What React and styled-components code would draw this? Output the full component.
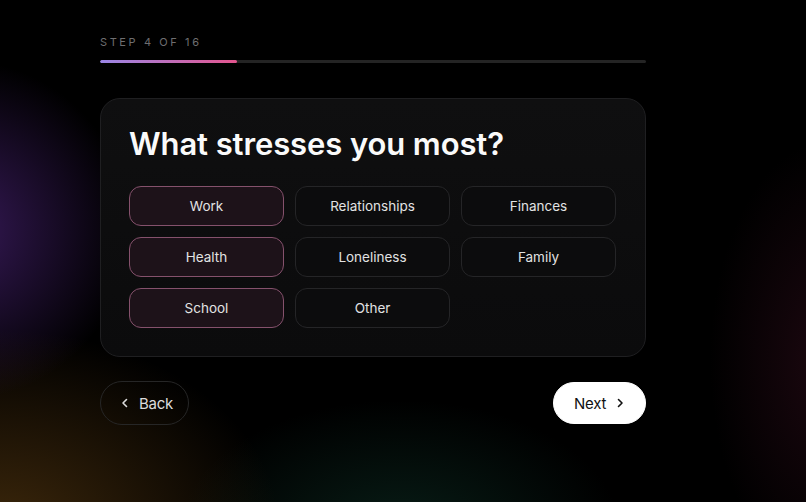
import React, {useState} from 'react';
import styled, {createGlobalStyle} from 'styled-components';

const OPTIONS = [
    'Work', 'Relationships', 'Finances',
    'Health', 'Loneliness', 'Family',
    'School', 'Other',
];

const GlobalStyle = createGlobalStyle`
  html, body {
    margin: 0;
    padding: 0;
    background: #000;
  }
  body {
    font-family: Inter, "Noto Sans", sans-serif;
    color: #e6e6e6;
  }
`;

const Page = styled.div`
  position: relative;
  width: 806px;
  height: 502px;
  overflow: hidden;
  background:
    radial-gradient(circle at -40px 230px, rgba(90, 42, 145, 0.6), transparent 170px),
    radial-gradient(ellipse 280px 200px at 0px 530px, rgba(120, 78, 22, 0.5), transparent 100%),
    radial-gradient(ellipse 220px 130px at 400px 530px, rgba(20, 75, 58, 0.38), transparent 100%),
    radial-gradient(ellipse 120px 220px at 830px 360px, rgba(75, 20, 42, 0.38), transparent 100%),
    #000;
`;

const Shell = styled.div`
  width: 546px;
  padding: 36px 0 0 100px;
  display: flex;
  flex-direction: column;
`;

const StepLabel = styled.div`
  font-size: 11px;
  letter-spacing: 2.6px;
  color: #6e6e70;
  line-height: 12px;
`;

const Track = styled.div`
  margin-top: 12px;
  height: 3px;
  border-radius: 2px;
  background: #242424;
  overflow: hidden;
`;

const Fill = styled.div`
  height: 100%;
  border-radius: 2px;
  background: linear-gradient(90deg, #9a86e6, #e4558e);
`;

const Card = styled.div`
  margin-top: 35px;
  padding: 26px 28px 28px 28px;
  border: 1px solid #1f1f21;
  border-radius: 20px;
  background: linear-gradient(180deg, #0f0f10, #0b0b0c);
`;

const Title = styled.h1`
  margin: 0 0 23px 0;
  font-size: 31px;
  font-weight: 600;
  letter-spacing: -0.1px;
  color: #fafafa;
  line-height: 38px;
`;

const Grid = styled.div`
  display: grid;
  grid-template-columns: repeat(3, 155px);
  gap: 11px;
`;

const Option = styled.button`
  height: 40px;
  border-radius: 12px;
  font-family: Inter, "Noto Sans", sans-serif;
  font-size: 13.5px;
  color: #e2e2e2;
  cursor: pointer;
  border: 1px solid ${(props) => (props.selected ? '#85516c' : '#252527')};
  background: ${(props) => (props.selected ? '#1d1219' : '#0c0c0d')};
`;

const Footer = styled.div`
  margin-top: 24px;
  display: flex;
  justify-content: space-between;
  align-items: center;
`;

const PillButton = styled.button`
  display: flex;
  align-items: center;
  gap: 8px;
  border-radius: 999px;
  font-family: Inter, "Noto Sans", sans-serif;
  font-size: 15px;
  letter-spacing: -0.3px;
  cursor: pointer;
  height: ${(props) => (props.primary ? '42px' : '44px')};
  padding: ${(props) => (props.primary ? '0 19px 0 20px' : '0 15px 0 18px')};
  color: ${(props) => (props.primary ? '#111' : '#dcdcdc')};
  background: ${(props) => (props.primary ? '#fff' : 'transparent')};
  border: 1px solid ${(props) => (props.primary ? '#fff' : '#262626')};
`;

const Chevron = ({dir}) => (
    <svg width="12" height="12" viewBox="0 0 12 12" fill="none">
        <path
            d={dir === 'left' ? 'M7.5 2.5 4 6l3.5 3.5' : 'M4.5 2.5 8 6 4.5 9.5'}
            stroke="currentColor"
            strokeWidth="1.6"
            strokeLinecap="round"
            strokeLinejoin="round"
        />
    </svg>
);

export default function App() {
    const [selected, setSelected] = useState(['Work', 'Health', 'School']);

    const toggle = (name) => {
        setSelected((prev) =>
            prev.includes(name) ? prev.filter((n) => n !== name) : [...prev, name]
        );
    };

    return (
        <Page>
            <GlobalStyle />
            <Shell>
                <StepLabel>STEP 4 OF 16</StepLabel>
                <Track>
                    <Fill style={{width: `${(4 / 16) * 100}%`}} />
                </Track>
                <Card>
                    <Title>What stresses you most?</Title>
                    <Grid>
                        {OPTIONS.map((name) => (
                            <Option
                                key={name}
                                selected={selected.includes(name)}
                                onClick={() => toggle(name)}
                            >
                                {name}
                            </Option>
                        ))}
                    </Grid>
                </Card>
                <Footer>
                    <PillButton>
                        <Chevron dir="left" />
                        Back
                    </PillButton>
                    <PillButton primary>
                        Next
                        <Chevron dir="right" />
                    </PillButton>
                </Footer>
            </Shell>
        </Page>
    );
}
